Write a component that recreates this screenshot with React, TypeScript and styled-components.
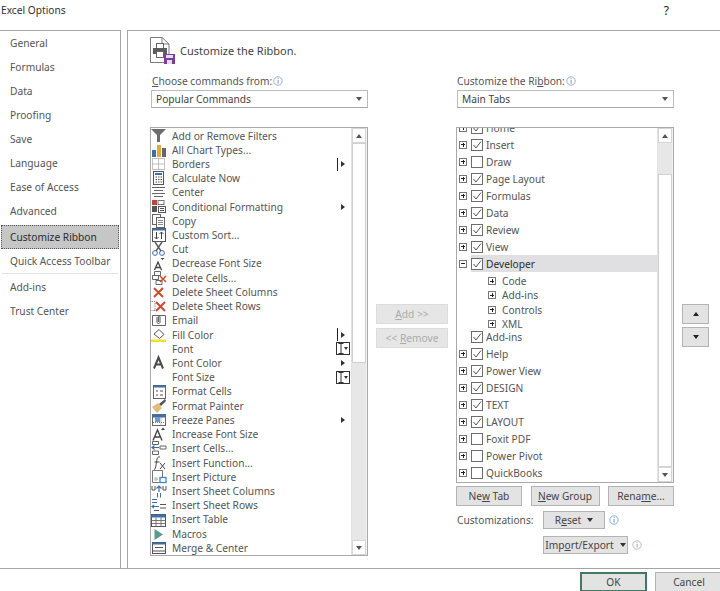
import React from "react";
import styled, { createGlobalStyle } from "styled-components";

const GlobalStyle = createGlobalStyle`
  html, body {
    margin: 0;
    padding: 0;
    width: 720px;
    height: 591px;
    overflow: hidden;
    background: #fff;
    font-family: "Noto Sans", "Open Sans", sans-serif;
    font-size: 10.2px;
    color: #555;
  }
  u { text-underline-offset: 1px; }
`;

const Dialog = styled.div`
  width: 720px;
  height: 591px;
  display: flex;
  flex-direction: column;
  overflow: hidden;
`;

const TitleBar = styled.div`
  height: 30px;
  flex: none;
  display: flex;
  align-items: center;
  justify-content: space-between;
  padding: 0 51px 10px 1px;
  box-sizing: border-box;
  color: #333;
`;

const HelpMark = styled.span`
  font-size: 12px;
  color: #222;
`;

const Body = styled.div`
  flex: none;
  height: 538px;
  display: flex;
  gap: 6px;
`;

const Sidebar = styled.nav`
  width: 121px;
  flex: none;
  box-sizing: border-box;
  border-top: 1px solid #a5a5a5;
  border-right: 1px solid #a5a5a5;
`;

const NavItem = styled.div<{ $active?: boolean }>`
  height: 24px;
  line-height: 24px;
  padding-left: ${({ $active }) => ($active ? "8px" : "10px")};
  box-sizing: border-box;
  ${({ $active }) =>
    $active &&
    `
    margin: 2px 1px 0 1px;
    background: #c6c6c6;
    border: 1px dotted #555;
    line-height: 22px;
    color: #2b2b2b;
  `}
`;

const NavSeparator = styled.div`
  height: 1px;
  margin: 0 2px 1px;
  background: #e4e4e4;
`;

const Panel = styled.main`
  flex: 1;
  box-sizing: border-box;
  border-top: 1px solid #a5a5a5;
  border-left: 1px solid #a5a5a5;
  padding: 6px 0 0 22px;
`;

const PanelHeader = styled.header`
  display: flex;
  align-items: center;
  gap: 5px;
  height: 26px;
  font-size: 11px;
  color: #444;
`;

const Columns = styled.div`
  display: grid;
  grid-template-columns: 218px 88px 218px 8px 27px;
  margin-top: 11px;
`;

const Column = styled.section`
  display: flex;
  flex-direction: column;
`;

const FieldLabel = styled.label<{ $inset: number }>`
  height: 14px;
  line-height: 14px;
  margin-left: ${({ $inset }) => $inset}px;
  margin-bottom: 2px;
  display: flex;
  align-items: center;
  gap: 1px;
`;

const Select = styled.div`
  height: 18px;
  margin-left: 1px;
  box-sizing: border-box;
  border: 1px solid #bcbcbc;
  border-bottom-color: #a9a9a9;
  display: flex;
  align-items: center;
  justify-content: space-between;
  padding: 0 5px 0 4px;
  color: #444;
`;

const Caret = styled.span<{ $up?: boolean; $color?: string }>`
  width: 0;
  height: 0;
  flex: none;
  border-left: 3.5px solid transparent;
  border-right: 3.5px solid transparent;
  ${({ $up, $color }) =>
    $up
      ? `border-bottom: 4px solid ${$color || "#555"};`
      : `border-top: 4px solid ${$color || "#555"};`}
`;

const ListFrame = styled.div<{ $height: number }>`
  height: ${({ $height }) => $height}px;
  margin-top: 19px;
  box-sizing: border-box;
  border: 1px solid #a9a9a9;
  display: flex;
  overflow: hidden;
`;

const CommandList = styled.ul`
  flex: 1;
  min-width: 0;
  list-style: none;
  margin: 0;
  padding: 0.5px 0 0;
`;

const CommandRow = styled.li`
  height: 14.22px;
  line-height: 14.22px;
  display: flex;
  align-items: center;
`;

const IconSlot = styled.span`
  width: 16px;
  height: 14px;
  flex: none;
  margin-right: 5px;
  display: flex;
`;

const Trail = styled.span<{ $inset: number }>`
  margin-left: auto;
  width: 15px;
  box-sizing: border-box;
  padding-left: ${({ $inset }) => $inset}px;
  flex: none;
  display: flex;
  align-items: center;
  height: 14px;
`;

const SubArrow = styled.span<{ $bar?: boolean }>`
  width: 0;
  height: 0;
  border-top: 3.5px solid transparent;
  border-bottom: 3.5px solid transparent;
  border-left: 4px solid #333;
  margin-left: ${({ $bar }) => ($bar ? "3px" : "0")};
`;

const SplitBar = styled.span`
  width: 1px;
  height: 13px;
  background: #222;
`;

const FontBox = styled.span`
  width: 14px;
  height: 13px;
  box-sizing: border-box;
  border: 1px solid #333;
  background: #fff;
  display: flex;
  align-items: center;
  justify-content: space-between;
  padding: 0 1px;
`;

const TinyCaret = styled.span`
  border-left: 2.5px solid transparent;
  border-right: 2.5px solid transparent;
  border-top: 3px solid #333;
`;

const ScrollBar = styled.div`
  width: 14px;
  flex: none;
  display: flex;
  flex-direction: column;
  border-left: 1px solid #e2e2e2;
  border-right: 1px solid #f2f2f2;
`;

const ScrollButton = styled.div`
  height: 15px;
  flex: none;
  display: flex;
  align-items: center;
  justify-content: center;
  background: #fff;
  border: 1px solid #d6d6d6;
  box-sizing: border-box;
`;

const ScrollPiece = styled.div<{ $thumb?: boolean; $grow?: boolean; $size?: number }>`
  background: ${({ $thumb }) => ($thumb ? "#fff" : "#e7e7e7")};
  ${({ $thumb }) => $thumb && "border: 1px solid #d0d0d0; box-sizing: border-box;"}
  ${({ $grow }) => $grow && "flex: 1;"}
  ${({ $size }) => $size && `height: ${$size}px; flex: none;`}
`;

const MiddleColumn = styled.div`
  padding: 230px 0 0 8px;
  display: flex;
  flex-direction: column;
  gap: 4px;
  width: 72px;
`;

const Button = styled.button<{ $width?: number; $disabled?: boolean; $height?: number }>`
  width: ${({ $width }) => ($width ? `${$width}px` : "auto")};
  height: ${({ $height }) => $height || 20}px;
  box-sizing: border-box;
  padding: 0;
  flex: none;
  font: inherit;
  color: ${({ $disabled }) => ($disabled ? "#ababab" : "#444")};
  background: ${({ $disabled }) => ($disabled ? "#e6e6e6" : "#e3e3e3")};
  border: 1px solid ${({ $disabled }) => ($disabled ? "#dcdcdc" : "#b4b4b4")};
  display: inline-flex;
  align-items: center;
  justify-content: center;
  gap: 6px;
`;

const MoveColumn = styled.div`
  grid-column: 5;
  padding-top: 230px;
  display: flex;
  flex-direction: column;
  gap: 3px;
`;

const TreeScroll = styled.div`
  flex: 1;
  min-width: 0;
  overflow: hidden;
`;

const TreeInner = styled.div`
  margin-top: -9px;
`;

const TreeRow = styled.div`
  height: 17px;
  display: flex;
  align-items: center;
  padding-left: 2px;
`;

const ExpanderSlot = styled.span`
  width: 8px;
  flex: none;
  margin-right: 4px;
  display: flex;
`;

const TreeLabel = styled.div<{ $selected?: boolean }>`
  flex: 1;
  height: 17px;
  display: flex;
  align-items: center;
  gap: 3px;
  ${({ $selected }) => $selected && "background: #e0e0e2; color: #2c2c2c;"}
`;

const ChildGroup = styled.div`
  height: 56px;
  box-sizing: border-box;
  padding-top: 2px;
`;

const ChildRow = styled.div`
  height: 14.25px;
  display: flex;
  align-items: center;
  padding-left: 31px;
  gap: 6px;
`;

const Expander = styled.span`
  width: 8px;
  height: 8px;
  box-sizing: border-box;
  border: 1px solid #777;
  position: relative;
  flex: none;
`;

const ExpanderH = styled.span`
  position: absolute;
  left: 1px;
  right: 1px;
  top: 2.5px;
  height: 1px;
  background: #222;
`;

const ExpanderV = styled.span`
  position: absolute;
  top: 1px;
  bottom: 1px;
  left: 2.5px;
  width: 1px;
  background: #222;
`;

const CheckBox = styled.span`
  width: 12px;
  height: 12px;
  box-sizing: border-box;
  border: 1px solid #6d6d6d;
  background: #fff;
  flex: none;
  display: flex;
`;

const ButtonRow = styled.div`
  display: flex;
  justify-content: space-between;
  margin-top: 3px;
`;

const CustomRow = styled.div<{ $top: number }>`
  display: flex;
  align-items: center;
  margin-top: ${({ $top }) => $top}px;
  padding-left: 87px;
  gap: 4px;
`;

const CustomLabel = styled.span`
  width: 82px;
  margin-left: -86px;
  flex: none;
`;

const Footer = styled.footer`
  flex: none;
  height: 23px;
  box-sizing: border-box;
  border-top: 1px solid #a5a5a5;
  padding-top: 3px;
  display: flex;
  justify-content: flex-end;
  gap: 8px;
`;

const OkButton = styled(Button)`
  border: 2px solid #3f7a63;
  background: #e3e3e3;
`;

const CancelButton = styled(Button)`
  margin-right: -3px;
`;

const Info = ({ color = "#7f9fc4" }: { color?: string }) => (
  <svg width="10" height="10" viewBox="0 0 10 10" style={{ flex: "none" }}>
    <circle cx="5" cy="5" r="4.2" fill="none" stroke={color} strokeWidth="0.8" />
    <rect x="4.6" y="2.2" width="1" height="1" fill={color} />
    <rect x="4.6" y="4" width="1" height="3.6" fill={color} />
  </svg>
);

const Check = () => (
  <svg width="10" height="10" viewBox="0 0 10 10">
    <path d="M1.5 5 L4 8 L9 1.5" fill="none" stroke="#555" strokeWidth="1" />
  </svg>
);

const IBeam = () => (
  <svg width="6" height="11" viewBox="0 0 6 11">
    <path d="M0.5 0.5 H5.5 M3 0.5 V10.5 M0.5 10.5 H5.5" fill="none" stroke="#333" />
  </svg>
);

const Plus = ({ minus }: { minus?: boolean }) => (
  <Expander>
    <ExpanderH />
    {!minus && <ExpanderV />}
  </Expander>
);

const HeaderIcon = () => (
  <svg width="25" height="27" viewBox="0 0 25 27">
    <path d="M0.5 0.5 H12 L19 7 V25.5 H0.5 Z" fill="#fff" stroke="#7d7d7d" />
    <path d="M12 0.5 V7 H19" fill="none" stroke="#7d7d7d" />
    <rect x="6.5" y="6.5" width="7" height="5" fill="#fff" stroke="#666" />
    <rect x="3" y="11" width="14" height="6" fill="#5c5c5c" />
    <rect x="6.5" y="14.5" width="7" height="6" fill="#fff" stroke="#666" />
    <rect x="14" y="17" width="11" height="10" fill="#7a3f98" />
    <rect x="16" y="18" width="7" height="3" fill="#e7dcee" />
    <rect x="17" y="23" width="5" height="4" fill="#e7dcee" />
  </svg>
);

const redX = "M9 5 L15 11 M15 5 L9 11";

const commandIcon = (id: string) => {
  switch (id) {
    case "filter":
      return <path d="M0 0 H15 L9 6 V13 H6 V6 Z" fill="#6b6b6b" />;
    case "chart":
      return (
        <g>
          <rect x="1" y="7" width="4" height="7" fill="#3f6fa8" />
          <rect x="6" y="2" width="4" height="12" fill="#e2a93c" />
          <rect x="11" y="5" width="4" height="9" fill="#666" />
        </g>
      );
    case "borders":
      return (
        <g fill="none" stroke="#888" strokeDasharray="1 1">
          <rect x="1.5" y="1.5" width="12" height="11" />
          <path d="M7.5 1.5 V12.5 M1.5 7 H13.5" />
        </g>
      );
    case "calc":
      return (
        <g>
          <rect x="2.5" y="0.5" width="10" height="13" fill="#fff" stroke="#555" />
          <rect x="4" y="2" width="7" height="2" fill="#3f6fa8" />
          <path d="M4.5 6 H11 M4.5 8.5 H11 M4.5 11 H11" stroke="#555" strokeDasharray="1.5 1" />
        </g>
      );
    case "center":
      return <path d="M1 2.5 H14 M3 5.5 H12 M1 8.5 H14 M3 11.5 H12" stroke="#666" />;
    case "cond":
      return (
        <g>
          <rect x="1" y="0" width="5" height="5" fill="#b5483a" />
          <rect x="7" y="0.5" width="6" height="4" fill="#fff" stroke="#777" />
          <rect x="1" y="6" width="5" height="6" fill="#555" />
          <rect x="7.5" y="6.5" width="7" height="6" fill="#fff" stroke="#555" />
          <path d="M9 8.5 H13 M9 10.5 H13" stroke="#555" />
        </g>
      );
    case "copy":
      return (
        <g>
          <rect x="1.5" y="0.5" width="8" height="10" fill="#fff" stroke="#666" />
          <rect x="5.5" y="3.5" width="8" height="10" fill="#fff" stroke="#666" />
          <path d="M7 6.5 H12 M7 8.5 H12 M7 10.5 H12" stroke="#888" />
        </g>
      );
    case "sort":
      return (
        <g>
          <rect x="1.5" y="0.5" width="13" height="13" fill="#fff" stroke="#555" />
          <rect x="1.5" y="0.5" width="13" height="2" fill="#3f6fa8" />
          <path d="M5.5 4 V11 M3.5 9 L5.5 11 L7.5 9 M10.5 11 V4 M8.5 6 L10.5 4 L12.5 6" fill="none" stroke="#444" />
        </g>
      );
    case "cut":
      return (
        <g fill="none" stroke="#5a5a5a">
          <path d="M4 0 L10 9 M11 0 L5 9" strokeWidth="1.4" />
          <circle cx="4" cy="11" r="2.4" stroke="#3f6fa8" />
          <circle cx="11" cy="11" r="2.4" stroke="#3f6fa8" />
        </g>
      );
    case "fontDown":
      return (
        <g>
          <path d="M3.5 13 L7 5 L10.5 13 M5 10.5 H9" fill="none" stroke="#444" strokeWidth="1.3" />
          <path d="M9.5 1 H13.5 L11.5 3 Z" fill="#444" />
        </g>
      );
    case "delCells":
      return (
        <g>
          <path d="M3.5 0.5 H9.5 V4.5 H3.5 Z M1.5 4.5 H7.5 V8.5 H1.5 Z M5 9.5 H11 V13.5 H5 Z" fill="none" stroke="#666" />
          <path d={redX} stroke="#cf4a2c" strokeWidth="1.5" />
        </g>
      );
    case "delCols":
      return <path d="M3 3 L12 12 M12 3 L3 12" stroke="#cf4a2c" strokeWidth="2" />;
    case "delRows":
      return (
        <g>
          <path d="M0.5 2.5 H4 V11.5 H0.5" fill="none" stroke="#888" strokeDasharray="1.5 1" />
          <path d="M5 3 L14 12 M14 3 L5 12" stroke="#cf4a2c" strokeWidth="2" />
        </g>
      );
    case "email":
      return (
        <g>
          <path d="M1.5 2.5 H14.5 V12.5 H1.5 Z" fill="#fff" stroke="#666" />
          <path d="M6 4 V9.5 A1.6 1.6 0 0 0 9 9.5 V3.5 A1 1 0 0 0 7.4 3.5 V9" fill="none" stroke="#555" />
        </g>
      );
    case "fill":
      return (
        <g>
          <path d="M3 6 L8 1.5 L13 6.5 L8.5 10.5 Z" fill="#fff" stroke="#555" />
          <rect x="0" y="11.5" width="15" height="2.5" fill="#f3e11f" />
        </g>
      );
    case "fontColor":
      return <path d="M3 12.5 L7.5 1.5 L12 12.5 M4.8 8.5 H10.2" fill="none" stroke="#4a4a4a" strokeWidth="2" />;
    case "formatCells":
      return (
        <g>
          <rect x="2.5" y="0.5" width="12" height="13" fill="#fff" stroke="#666" />
          <rect x="2.5" y="0.5" width="12" height="2" fill="#3f6fa8" />
          <path d="M5 6 H7 M9 6 H12 M5 10 H7 M9 10 H12" stroke="#555" />
        </g>
      );
    case "painter":
      return (
        <g>
          <path d="M1 8 L7 4 L11 9 L6 14 Z" fill="#e3bb7a" />
          <path d="M8 5 L14 0 L15 2 L10 7 Z" fill="#555" />
        </g>
      );
    case "freeze":
      return (
        <g>
          <rect x="1.5" y="1.5" width="13" height="11" fill="#fff" stroke="#666" />
          <rect x="1.5" y="1.5" width="13" height="3" fill="#3f6fa8" />
          <rect x="4" y="4" width="5" height="5" fill="#6f9bd0" />
          <path d="M10 4.5 V12 M2 9.5 H14" stroke="#777" strokeDasharray="1 1" />
        </g>
      );
    case "fontUp":
      return (
        <g>
          <path d="M2 13.5 L6.5 3 L11 13.5 M3.8 10 H9.2" fill="none" stroke="#444" strokeWidth="1.4" />
          <path d="M10 3 H14 L12 0.5 Z" fill="#444" />
        </g>
      );
    case "insCells":
      return (
        <g>
          <path d="M1.5 0.5 H7.5 V3.5 H1.5 Z M9 5 H15 V8 H9 Z M1.5 10 H7.5 V13.5 H1.5 Z" fill="none" stroke="#666" />
          <path d="M8 6.5 H1 M3.5 4.5 L1 6.5 L3.5 8.5" fill="none" stroke="#3f6fa8" strokeWidth="1.2" />
        </g>
      );
    case "fx":
      return (
        <g fill="none" stroke="#444">
          <path d="M3 13.5 C5.5 13.5 5 4 6.5 2 C7 1 8 0.5 9 1" />
          <path d="M3.5 6 H8.5 M9 7 L14 13 M14 7 L9 13" />
        </g>
      );
    case "picture":
      return (
        <g>
          <path d="M1.5 0.5 H11.5 V12.5 H1.5 Z" fill="#fff" stroke="#777" />
          <circle cx="5" cy="9" r="2" fill="#b9c9db" />
          <rect x="9" y="7.5" width="6" height="5" fill="#fff" stroke="#3f86c4" strokeWidth="1.3" />
        </g>
      );
    case "insCols":
      return (
        <g fill="none">
          <path d="M1 2 V6 H4 V2 M12 2 V6 H15 V2" stroke="#555" />
          <path d="M8 8 V2 M5.5 4.5 L8 2 L10.5 4.5" stroke="#3f6fa8" strokeWidth="1.2" />
          <path d="M6.5 9 V13.5 M9.5 9 V13.5" stroke="#3f6fa8" />
        </g>
      );
    case "insRows":
      return (
        <g fill="none">
          <path d="M6 1.5 H1 M6 4.5 H1 M3 7 L1 8.5 L3 10 M1 8.5 H8" stroke="#3f6fa8" strokeWidth="1.1" />
          <path d="M9 6.5 H15 M9 10 H15 M3 12.5 H8" stroke="#555" />
        </g>
      );
    case "table":
      return (
        <g>
          <rect x="0.5" y="1.5" width="14" height="12" fill="#fff" stroke="#555" />
          <rect x="0.5" y="1.5" width="14" height="3" fill="#3f6fa8" />
          <path d="M0.5 7.5 H14.5 M0.5 10.5 H14.5 M5 4.5 V13.5 M10 4.5 V13.5" stroke="#777" />
        </g>
      );
    case "macros":
      return <path d="M3.5 2 L12 7.5 L3.5 13 Z" fill="#5a9a8c" />;
    case "merge":
      return (
        <g>
          <rect x="1.5" y="1.5" width="13" height="11" fill="#fff" stroke="#555" />
          <rect x="1.5" y="1.5" width="13" height="2" fill="#3f6fa8" />
          <path d="M1.5 10 H14.5 M4 6.5 H12" stroke="#555" />
        </g>
      );
    default:
      return null;
  }
};

const CommandIcon = ({ id }: { id?: string }) => (
  <IconSlot>
    {id && (
      <svg width="16" height="14" viewBox="0 0 16 14" style={{ overflow: "visible" }}>
        {commandIcon(id)}
      </svg>
    )}
  </IconSlot>
);

type Command = { label: string; icon?: string; trail?: "arrow" | "split" | "font" };

const commands: Command[] = [
  { label: "Add or Remove Filters", icon: "filter" },
  { label: "All Chart Types...", icon: "chart" },
  { label: "Borders", icon: "borders", trail: "split" },
  { label: "Calculate Now", icon: "calc" },
  { label: "Center", icon: "center" },
  { label: "Conditional Formatting", icon: "cond", trail: "arrow" },
  { label: "Copy", icon: "copy" },
  { label: "Custom Sort...", icon: "sort" },
  { label: "Cut", icon: "cut" },
  { label: "Decrease Font Size", icon: "fontDown" },
  { label: "Delete Cells...", icon: "delCells" },
  { label: "Delete Sheet Columns", icon: "delCols" },
  { label: "Delete Sheet Rows", icon: "delRows" },
  { label: "Email", icon: "email" },
  { label: "Fill Color", icon: "fill", trail: "split" },
  { label: "Font", trail: "font" },
  { label: "Font Color", icon: "fontColor", trail: "arrow" },
  { label: "Font Size", trail: "font" },
  { label: "Format Cells", icon: "formatCells" },
  { label: "Format Painter", icon: "painter" },
  { label: "Freeze Panes", icon: "freeze", trail: "arrow" },
  { label: "Increase Font Size", icon: "fontUp" },
  { label: "Insert Cells...", icon: "insCells" },
  { label: "Insert Function...", icon: "fx" },
  { label: "Insert Picture", icon: "picture" },
  { label: "Insert Sheet Columns", icon: "insCols" },
  { label: "Insert Sheet Rows", icon: "insRows" },
  { label: "Insert Table", icon: "table" },
  { label: "Macros", icon: "macros" },
  { label: "Merge & Center", icon: "merge" },
];

const tabsBefore: [string, boolean][] = [
  ["Home", true],
  ["Insert", true],
  ["Draw", false],
  ["Page Layout", true],
  ["Formulas", true],
  ["Data", true],
  ["Review", true],
  ["View", true],
];

const tabsAfter: [string, boolean][] = [
  ["Help", true],
  ["Power View", true],
  ["DESIGN", true],
  ["TEXT", true],
  ["LAYOUT", true],
  ["Foxit PDF", false],
  ["Power Pivot", false],
  ["QuickBooks", false],
];

const navTop = ["General", "Formulas", "Data", "Proofing", "Save", "Language", "Ease of Access", "Advanced"];

const Trailer = ({ kind }: { kind?: Command["trail"] }) => {
  if (kind === "arrow")
    return (
      <Trail $inset={5}>
        <SubArrow />
      </Trail>
    );
  if (kind === "split")
    return (
      <Trail $inset={1}>
        <SplitBar />
        <SubArrow $bar />
      </Trail>
    );
  if (kind === "font")
    return (
      <Trail $inset={0}>
        <FontBox>
          <IBeam />
          <TinyCaret />
        </FontBox>
      </Trail>
    );
  return null;
};

const TabRow = ({ label, checked, expander = "plus", selected }: {
  label: string;
  checked: boolean;
  expander?: "plus" | "minus" | "none";
  selected?: boolean;
}) => (
  <TreeRow>
    <ExpanderSlot>
      {expander !== "none" && <Plus minus={expander === "minus"} />}
    </ExpanderSlot>
    <TreeLabel $selected={selected}>
      <CheckBox>{checked && <Check />}</CheckBox>
      {label}
    </TreeLabel>
  </TreeRow>
);

export default function App() {
  return (
    <Dialog>
      <GlobalStyle />
      <TitleBar>
        <span>Excel Options</span>
        <HelpMark>?</HelpMark>
      </TitleBar>
      <Body>
        <Sidebar>
          {navTop.map((item) => (
            <NavItem key={item}>{item}</NavItem>
          ))}
          <NavItem $active>Customize Ribbon</NavItem>
          <NavItem>Quick Access Toolbar</NavItem>
          <NavSeparator />
          <NavItem>Add-ins</NavItem>
          <NavItem>Trust Center</NavItem>
        </Sidebar>
        <Panel>
          <PanelHeader>
            <HeaderIcon />
            Customize the Ribbon.
          </PanelHeader>
          <Columns>
            <Column>
              <FieldLabel $inset={2}>
                <span>
                  <u>C</u>hoose commands from:
                </span>
                <Info />
              </FieldLabel>
              <Select>
                Popular Commands
                <Caret />
              </Select>
              <ListFrame $height={429}>
                <CommandList>
                  {commands.map((c) => (
                    <CommandRow key={c.label}>
                      <CommandIcon id={c.icon} />
                      {c.label}
                      <Trailer kind={c.trail} />
                    </CommandRow>
                  ))}
                </CommandList>
                <ScrollBar>
                  <ScrollButton>
                    <Caret $up />
                  </ScrollButton>
                  <ScrollPiece $thumb $size={220} />
                  <ScrollPiece $grow />
                  <ScrollButton>
                    <Caret />
                  </ScrollButton>
                </ScrollBar>
              </ListFrame>
            </Column>

            <MiddleColumn>
              <Button $disabled $width={72}>
                <span>
                  <u>A</u>dd &gt;&gt;
                </span>
              </Button>
              <Button $disabled $width={72}>
                <span>
                  &lt;&lt; <u>R</u>emove
                </span>
              </Button>
            </MiddleColumn>

            <Column>
              <FieldLabel $inset={1}>
                <span>
                  Customize the Ri<u>b</u>bon:
                </span>
                <Info />
              </FieldLabel>
              <Select>
                Main Tabs
                <Caret />
              </Select>
              <ListFrame $height={356}>
                <TreeScroll>
                  <TreeInner>
                    {tabsBefore.map(([label, checked]) => (
                      <TabRow key={label} label={label} checked={checked} />
                    ))}
                    <TabRow label="Developer" checked expander="minus" selected />
                    <ChildGroup>
                      {["Code", "Add-ins", "Controls", "XML"].map((label) => (
                        <ChildRow key={label}>
                          <Plus />
                          {label}
                        </ChildRow>
                      ))}
                    </ChildGroup>
                    <TabRow label="Add-ins" checked expander="none" />
                    {tabsAfter.map(([label, checked]) => (
                      <TabRow key={label} label={label} checked={checked} />
                    ))}
                  </TreeInner>
                </TreeScroll>
                <ScrollBar>
                  <ScrollButton>
                    <Caret $up />
                  </ScrollButton>
                  <ScrollPiece $size={31} />
                  <ScrollPiece $thumb $grow />
                  <ScrollButton>
                    <Caret />
                  </ScrollButton>
                </ScrollBar>
              </ListFrame>
              <ButtonRow>
                <Button $width={66}>
                  <span>
                    Ne<u>w</u> Tab
                  </span>
                </Button>
                <Button $width={69}>
                  <span>
                    <u>N</u>ew Group
                  </span>
                </Button>
                <Button $width={66}>
                  <span>
                    Rena<u>m</u>e...
                  </span>
                </Button>
              </ButtonRow>
              <CustomRow $top={5}>
                <CustomLabel>Customizations:</CustomLabel>
                <Button $width={62} $height={18}>
                  <span>
                    R<u>e</u>set
                  </span>
                  <Caret $color="#333" />
                </Button>
                <Info color="#6f9ed6" />
              </CustomRow>
              <CustomRow $top={7}>
                <Button $width={85} $height={18}>
                  <span>
                    Imp<u>o</u>rt/Export
                  </span>
                  <Caret $color="#333" />
                </Button>
                <Info color="#9fb4a8" />
              </CustomRow>
            </Column>

            <MoveColumn>
              <Button $width={27}>
                <Caret $up $color="#222" />
              </Button>
              <Button $width={27}>
                <Caret $color="#222" />
              </Button>
            </MoveColumn>
          </Columns>
        </Panel>
      </Body>
      <Footer>
        <OkButton $width={67}>OK</OkButton>
        <CancelButton $width={68}>Cancel</CancelButton>
      </Footer>
    </Dialog>
  );
}
